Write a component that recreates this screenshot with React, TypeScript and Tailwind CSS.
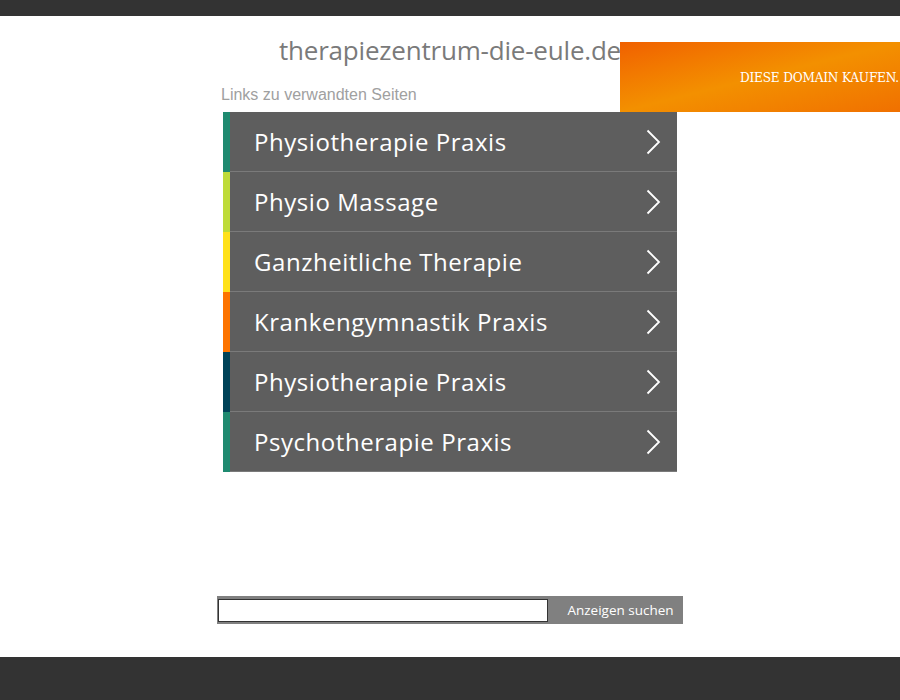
const links = [
  { label: 'Physiotherapie Praxis', color: 'bg-[#1f8a70]' },
  { label: 'Physio Massage', color: 'bg-[#bedb39]' },
  { label: 'Ganzheitliche Therapie', color: 'bg-[#ffe11a]' },
  { label: 'Krankengymnastik Praxis', color: 'bg-[#fd7400]' },
  { label: 'Physiotherapie Praxis', color: 'bg-[#004358]' },
  { label: 'Psychotherapie Praxis', color: 'bg-[#1f8a70]' },
];

function Chevron() {
  return (
    <svg width="16" height="26" viewBox="0 0 16 26" fill="none" className="shrink-0">
      <path d="M2.5 1.5 L14 13 L2.5 24.5" stroke="white" strokeWidth="1.8" />
    </svg>
  );
}

export default function App() {
  return (
    <div className="relative w-[900px] h-[700px] bg-white flex flex-col overflow-hidden font-['Liberation_Sans',sans-serif]">
      <div className="h-[16px] bg-[#333333] shrink-0" />

      {/* Buy banner */}
      <div className="absolute top-[42px] left-[620px] w-[280px] h-[70px] bg-gradient-to-br from-[#f06000] via-[#f39000] to-[#f07000] flex items-center justify-end overflow-hidden">
        <span className="text-white text-[13.5px] tracking-[-0.2px] whitespace-nowrap font-['DejaVu_Serif_Condensed','DejaVu_Serif',serif] [font-stretch:condensed] pr-[1px]">
          DIESE DOMAIN KAUFEN.
        </span>
      </div>

      <div className="flex-1 flex flex-col items-center">
        <h1 className="mt-[17px] h-[34px] text-[26px] leading-[34px] text-[#7a7a7a] tracking-[-0.2px] font-['Open_Sans',sans-serif]">
          therapiezentrum-die-eule.de
        </h1>

        <div className="w-[454px]">
          <div className="ml-[-2px] h-[45px] text-[16px] leading-[20px] text-[#a0a0a0] pt-[18px]">Links zu verwandten Seiten</div>
          <ul className="flex flex-col">
            {links.map((l, i) => (
              <li key={i} className="flex h-[60px]">
                <div className={`w-[7px] ${l.color}`} />
                <div className="flex-1 flex items-center bg-[#5e5e5e] border-b border-[#7a7a7a] pl-[24px] pr-[16px]">
                  <span className="flex-1 text-white text-[24px] tracking-[0.55px] font-['Open_Sans',sans-serif]">{l.label}</span>
                  <Chevron />
                </div>
              </li>
            ))}
          </ul>
        </div>

        <div className="mt-[124px] w-[466px] h-[28px] bg-[#808080] flex items-center pl-[1px]">
          <input className="w-[330px] h-[23px] bg-white border border-[#333] outline-none" />
          <span className="flex-1 text-center text-white text-[13.5px] font-['Open_Sans',sans-serif] pl-[10px]">Anzeigen suchen</span>
        </div>
      </div>

      <div className="h-[43px] bg-[#333333] shrink-0" />
    </div>
  );
}
